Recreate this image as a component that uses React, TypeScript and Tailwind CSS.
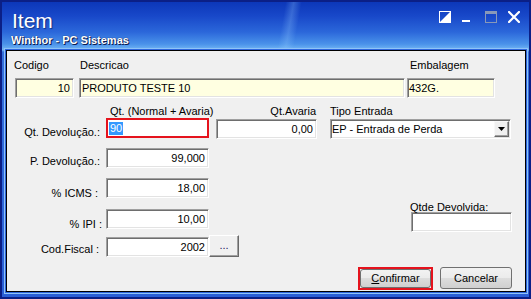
import React from "react";

const sunken =
  "border border-t-[#a0a0a0] border-l-[#a0a0a0] border-r-white border-b-white shadow-[inset_1px_1px_0_#6e6e6e,inset_-1px_-1px_0_#e3e3e3]";

function Field({ value, className = "", bg = "bg-white", align = "text-right pr-[3px]" }: { value: string; className?: string; bg?: string; align?: string }) {
  return (
    <div className={`h-[20px] ${sunken} ${bg} ${align} leading-[18px] whitespace-nowrap overflow-hidden ${className}`}>
      {value}
    </div>
  );
}

function TitleIcons() {
  return (
    <div className="flex gap-[11px] pt-[9px] pr-[9px]">
      <svg width="12" height="12" viewBox="0 0 12 12">
        <rect x="0.5" y="0.5" width="11" height="11" fill="none" stroke="#fff" strokeWidth="1" />
        <polygon points="11,1 11,11 1,11" fill="#fff" />
      </svg>
      <svg width="12" height="12" viewBox="0 0 12 12">
        <rect x="0" y="9" width="8" height="2" fill="#fff" />
      </svg>
      <svg width="12" height="12" viewBox="0 0 12 12">
        <rect x="0.5" y="0.5" width="11" height="11" fill="none" stroke="#8898b8" strokeWidth="1" />
        <rect x="0" y="0" width="12" height="3" fill="#8898b8" />
      </svg>
      <svg width="12" height="12" viewBox="0 0 12 12">
        <path d="M1 1 L11 11 M11 1 L1 11" stroke="#fff" strokeWidth="2.2" strokeLinecap="square" />
      </svg>
    </div>
  );
}

export default function App() {
  return (
    <div className="w-[531px] h-[299px] border-2 border-[#0b1f86] bg-[linear-gradient(180deg,#0c37b9_0px,#1848c9_14px,#2b67da_30px,#4a92ea_42px,#74b8f4_48px,#3470dc_50px,#2a5fd6_100%)] font-['Liberation_Sans',Arial,sans-serif] text-[11px] text-black overflow-hidden whitespace-nowrap">
      {/* Title bar */}
      <div className="h-[48px] flex justify-between bg-[linear-gradient(100deg,transparent_53%,rgba(150,205,255,0.28)_54.5%,transparent_56%)]">
        <div className="pl-[10px] pt-[7px]">
          <div className="text-[21px] leading-[24px] text-white [text-shadow:1px_1px_1px_rgba(0,20,80,0.6)]">Item</div>
          <div className="mt-[1px] -ml-[1px] text-[11px] leading-[13px] font-bold text-white [text-shadow:1px_1px_0_#0a1a50,0_0_1px_#0a1a50]">
            Winthor - PC Sistemas
          </div>
        </div>
        <TitleIcons />
      </div>

      {/* Client area */}
      <div className="ml-[4px] w-[520px] h-[242px] border border-black bg-[#f0f0f0] shadow-[0_0_0_1px_#2c64dc,0_0_0_2px_#8ec3f7]">
        {/* Row 1 */}
        <div className="flex pl-[8px] pt-[8px]">
          <div className="w-[59px]">
            <div className="h-[13px] leading-[13px] -ml-px">Codigo</div>
            <Field value="10" className="mt-[6px]" bg="bg-[#ffffe1]" />
          </div>
          <div className="w-[326px] ml-[5px]">
            <div className="h-[13px] leading-[13px] pl-px">Descricao</div>
            <Field value="PRODUTO TESTE 10" className="mt-[6px]" bg="bg-[#ffffe1]" align="text-left pl-[2px]" />
          </div>
          <div className="w-[88px] ml-[2px]">
            <div className="h-[13px] leading-[13px] pl-[3px]">Embalagem</div>
            <Field value="432G." className="mt-[6px]" bg="bg-[#ffffe1]" align="text-left pl-[1px]" />
          </div>
        </div>

        {/* Row 2 */}
        <div className="flex items-start mt-[7px]">
          <div className="w-[99px] text-right pr-[6px] mt-[21px] leading-[13px]">Qt. Devolução.:</div>
          <div className="w-[103px]">
            <div className="h-[13px] leading-[13px] pl-[4px] whitespace-nowrap">Qt. (Normal + Avaria)</div>
            <div className="h-[20px] border-2 border-[#e5131d] bg-white flex items-center pl-[1px]">
              <span className="bg-[#3399ff] text-white leading-[13px] px-px">90</span>
            </div>
          </div>
          <div className="w-[101px] ml-[7px]">
            <div className="h-[13px] leading-[13px] text-right pr-px">Qt.Avaria</div>
            <Field value="0,00" className="mt-[1px]" />
          </div>
          <div className="w-[181px] ml-[13px]">
            <div className="h-[13px] leading-[13px]">Tipo Entrada</div>
            <div className={`mt-[1px] h-[20px] ${sunken} bg-white flex items-center`}>
              <div className="flex-1 pl-[1px] leading-[18px] whitespace-nowrap">EP - Entrada de Perda</div>
              <div className="w-[15px] h-[16px] mr-[1px] bg-[#f0f0f0] border border-t-[#f8f8f8] border-l-[#f8f8f8] border-r-[#696969] border-b-[#696969] shadow-[inset_-1px_-1px_0_#a0a0a0] flex items-center justify-center">
                <svg width="7" height="4" viewBox="0 0 7 4">
                  <polygon points="0,0 7,0 3.5,4" fill="#000" />
                </svg>
              </div>
            </div>
          </div>
        </div>

        {/* Rows 3-6 + Qtde Devolvida */}
        <div className="flex mt-[9px]">
          <div className="flex flex-col">
            <div className="flex items-start">
              <div className="w-[99px] text-right pr-[6px] mt-[7px] leading-[13px]">P. Devolução.:</div>
              <Field value="99,000" className="w-[103px]" />
            </div>
            <div className="flex items-start mt-[10px]">
              <div className="w-[99px] text-right pr-[8px] mt-[9px] leading-[13px]">% ICMS :</div>
              <Field value="18,00" className="w-[103px]" />
            </div>
            <div className="flex items-start mt-[9px]">
              <div className="w-[99px] text-right pr-[4px] mt-[9px] leading-[13px]">% IPI :</div>
              <Field value="10,00" className="w-[103px]" />
            </div>
            <div className="flex items-start mt-[4px]">
              <div className="w-[99px] text-right pr-[7px] mt-[8px] leading-[13px]">Cod.Fiscal :</div>
              <Field value="2002" className="w-[103px] mt-[2px]" />
              <div className="w-[30px] h-[22px] bg-[#f0f0f0] border border-t-white border-l-white border-r-[#696969] border-b-[#696969] shadow-[inset_-1px_-1px_0_#a0a0a0] text-center leading-[18px] text-[#1a1a5a]">
                ...
              </div>
            </div>
          </div>
          <div className="ml-[171px] mt-[53px]">
            <div className="h-[11px] leading-[13px]">Qtde Devolvida:</div>
            <Field value="" className="w-[101px] ml-[1px]" />
          </div>
        </div>

        {/* Buttons */}
        <div className="flex justify-end items-start gap-[7px] pr-[13px] mt-[10px]">
          <div className="w-[75px] h-[23px] border-2 border-[#e5131d]">
            <div className="w-full h-full rounded-[3px] border border-[#707070] bg-[linear-gradient(#f2f2f2,#ebebeb_50%,#dddddd_50%,#cfcfcf)] flex items-center justify-center leading-[13px]">
              <span>
                <span className="underline underline-offset-1">C</span>onfirmar
              </span>
            </div>
          </div>
          <div className="w-[72px] h-[22px] rounded-[3px] border border-[#707070] bg-[linear-gradient(#f2f2f2,#ebebeb_50%,#dddddd_50%,#cfcfcf)] flex items-center justify-center leading-[13px]">
            Cancelar
          </div>
        </div>
      </div>
    </div>
  );
}
